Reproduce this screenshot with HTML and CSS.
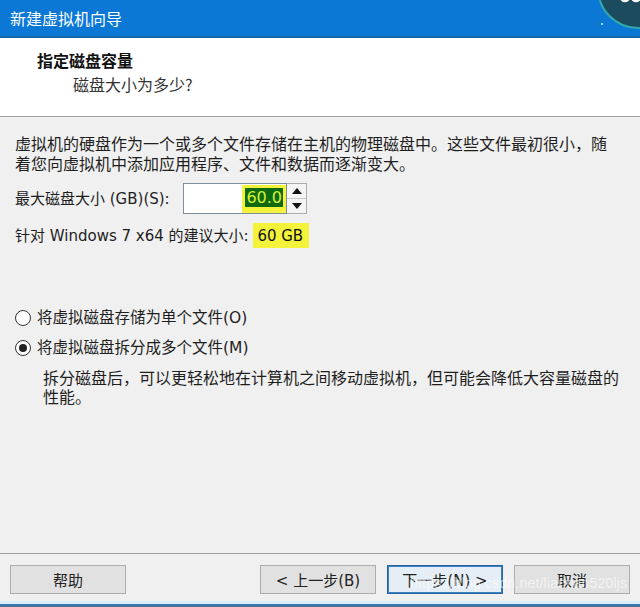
FILE: index.html
```html
<!DOCTYPE html>
<html lang="zh-CN">
<head>
    <meta charset="UTF-8">
    <title>新建虚拟机向导</title>
    <link rel="stylesheet" href="styles.css">
</head>
<body>
    <div class="window">
        <div class="titlebar">
            <span class="title">新建虚拟机向导</span>
            <svg class="avatar" width="60" height="40" viewBox="0 0 60 40">
                <circle cx="58" cy="-12" r="40" fill="#1d4b5e" stroke="#35a8ad" stroke-width="2"/>
                <circle cx="45" cy="-3" r="4" fill="none" stroke="#fff" stroke-width="2.5"/>
                <circle cx="56" cy="-3" r="4" fill="none" stroke="#fff" stroke-width="2.5"/>
                <circle cx="22" cy="24" r="1" fill="#cfe"/>
            </svg>
        </div>

        <div class="header">
            <div class="header-title">指定磁盘容量</div>
            <div class="header-sub">磁盘大小为多少?</div>
        </div>

        <div class="content">
            <p class="intro">虚拟机的硬盘作为一个或多个文件存储在主机的物理磁盘中。这些文件最初很小，随着您向虚拟机中添加应用程序、文件和数据而逐渐变大。</p>

            <div class="size-row">
                <span class="label">最大磁盘大小 (GB)(S):</span>
                <div class="spinbox">
                    <div class="spin-input">
                        <span class="marker"><span class="selected">60.0</span></span>
                    </div>
                    <div class="spin-buttons">
                        <div class="spin-btn"><span class="tri-up"></span></div>
                        <div class="spin-btn"><span class="tri-down"></span></div>
                    </div>
                </div>
            </div>

            <div class="recommend">针对 Windows 7 x64 的建议大小: <span class="marker-plain">60 GB</span></div>

            <div class="radio-row first">
                <span class="radio"></span>
                <span>将虚拟磁盘存储为单个文件(O)</span>
            </div>
            <div class="radio-row">
                <span class="radio checked"></span>
                <span>将虚拟磁盘拆分成多个文件(M)</span>
            </div>
            <p class="radio-desc">拆分磁盘后，可以更轻松地在计算机之间移动虚拟机，但可能会降低大容量磁盘的性能。</p>
        </div>

        <div class="footer">
            <button class="btn help">帮助</button>
            <button class="btn">&lt; 上一步(B)</button>
            <button class="btn default">下一步(N) &gt;</button>
            <button class="btn">取消</button>
            <span class="watermark">https://blog.csdn.net/liantian520ljs</span>
        </div>
        <div class="frame-bottom"></div>
    </div>
</body>
</html>
```

FILE: styles.css
```css
body {
    margin: 0;
    background: #f0f0f0;
    font-family: "Noto Sans CJK SC", sans-serif;
    color: #1e1e1e;
}

.window {
    width: 640px;
    height: 607px;
    display: flex;
    flex-direction: column;
    overflow: hidden;
}

.titlebar {
    position: relative;
    height: 36px;
    background: #0b78d6;
    border-bottom: 2px solid #1a65a5;
    display: flex;
    align-items: center;
    padding-left: 10px;
    color: white;
    font-size: 16px;
}

.avatar {
    position: absolute;
    right: 0;
    top: 0;
}

.header {
    height: 79px;
    background: white;
    border-bottom: 1px solid #a0a0a0;
    padding: 10px 0 0 37px;
    box-sizing: border-box;
    font-size: 16px;
    line-height: 24px;
}

.header-title {
    font-weight: 700;
    color: #111;
}

.header-sub {
    padding-left: 36px;
    color: #333;
}

.content {
    flex: 1;
    padding: 16px 20px 0 15px;
    font-size: 16px;
    line-height: 20px;
}

.intro {
    margin: 0;
    width: 602px;
}

.size-row {
    display: flex;
    align-items: center;
    margin-top: 10px;
    height: 31px;
}

.label {
    font-family: "DejaVu Sans", "Noto Sans CJK SC", sans-serif;
    font-size: 15px;
    width: 168px;
}

.spinbox {
    display: flex;
    height: 31px;
}

.spin-input {
    width: 104px;
    box-sizing: border-box;
    border: 1px solid #7f8e9c;
    background: white;
    display: flex;
    align-items: center;
    justify-content: flex-end;
}

.marker {
    background: #f4f33c;
    padding: 3px 3px 6px 3px;
    display: flex;
}

.selected {
    background: #0f6a12;
    color: #d6ee3a;
    font-family: "DejaVu Sans", sans-serif;
    font-size: 16px;
    line-height: 19px;
    padding: 0 1px;
}

.spin-buttons {
    width: 20px;
    display: flex;
    flex-direction: column;
    border: 1px solid #adadad;
    border-left: none;
    box-sizing: border-box;
    background: #f4f4f4;
}

.spin-btn {
    flex: 1;
    display: flex;
    align-items: center;
    justify-content: center;
}

.spin-btn + .spin-btn {
    border-top: 1px solid #c8c8c8;
}

.tri-up {
    border-left: 5px solid transparent;
    border-right: 5px solid transparent;
    border-bottom: 6px solid #111;
}

.tri-down {
    border-left: 5px solid transparent;
    border-right: 5px solid transparent;
    border-top: 6px solid #111;
}

.recommend {
    margin-top: 9px;
    font-family: "DejaVu Sans", "Noto Sans CJK SC", sans-serif;
    font-size: 15px;
    line-height: 24px;
}

.marker-plain {
    display: inline-block;
    background: #f4f33c;
    padding: 1px 6px 0 4px;
    color: #111;
}

.radio-row {
    display: flex;
    align-items: center;
    gap: 6px;
    height: 20px;
    margin-top: 10px;
    font-family: "DejaVu Sans", "Noto Sans CJK SC", sans-serif;
    font-size: 15.5px;
}

.radio-row.first {
    margin-top: 60px;
}

.radio {
    width: 16px;
    height: 16px;
    box-sizing: border-box;
    border: 1px solid #333;
    border-radius: 50%;
    background: white;
    display: flex;
    align-items: center;
    justify-content: center;
}

.radio.checked::after {
    content: "";
    width: 8px;
    height: 8px;
    border-radius: 50%;
    background: #222;
}

.radio-desc {
    margin: 10px 0 0 28px;
    line-height: 19px;
}

.footer {
    position: relative;
    height: 48px;
    border-top: 1px solid #a0a0a0;
    padding: 11px 10px 0 10px;
    box-sizing: border-box;
    display: flex;
    align-items: flex-start;
    gap: 11px;
}

.btn {
    width: 116px;
    height: 29px;
    border: 1px solid #adadad;
    background: #e1e1e1;
    font-family: "DejaVu Sans", "Noto Sans CJK SC", sans-serif;
    font-size: 15px;
    color: #222;
    padding: 0;
}

.btn.help {
    margin-right: auto;
}

.btn.default {
    border: 1px solid #2766a6;
    box-shadow: inset 0 0 0 1px #3d7fc0;
    background: #e5eef6;
}

.watermark {
    position: absolute;
    left: 410px;
    top: 21px;
    font-family: "Liberation Sans", sans-serif;
    font-size: 14px;
    color: rgba(255, 255, 255, 0.6);
    letter-spacing: 0.2px;
}

.frame-bottom {
    height: 6px;
    background: linear-gradient(#d6ecf9 0, #d6ecf9 3px, #3c76a6 3px);
}
```
